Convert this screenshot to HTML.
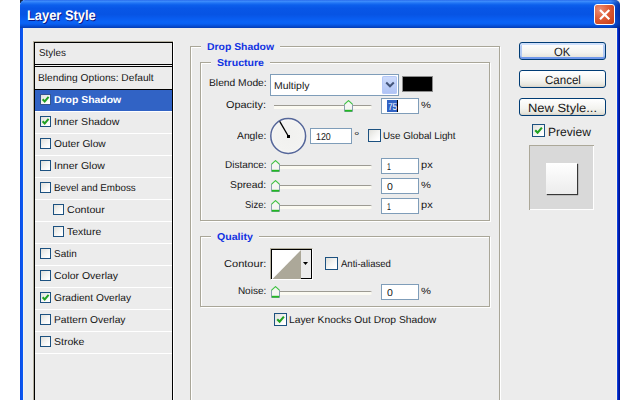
<!DOCTYPE html>
<html><head><meta charset="utf-8"><title>Layer Style</title>
<style>
html,body{margin:0;padding:0;width:640px;height:400px;overflow:hidden}
#root{position:absolute;left:0;top:0;width:640px;height:400px;overflow:hidden;background:#fff}
body{width:640px;height:400px;overflow:hidden;position:relative;background:#fff;font-family:"Liberation Sans",sans-serif}
.abs,.t,.cb,.inp,.btn,.trk,.ln,.box{position:absolute}
.t{white-space:nowrap;line-height:16px;transform-origin:0 0;text-rendering:geometricPrecision}
#win{position:absolute;left:20px;top:0;width:600px;height:420px;background:#ececec}
#tb{position:absolute;left:20px;top:0;width:600px;height:28px;border-radius:5px 5px 0 0;
background:linear-gradient(to bottom,#2a6cec 0,#3c8bfb 5%,#2074f4 11%,#0c5fec 18%,#0856e6 30%,#0754e4 52%,#095cef 66%,#0a63f6 78%,#0960f2 85%,#0752dc 91%,#0546c6 96%,#043cb4 100%)}
#bl{position:absolute;left:20px;top:28px;width:4px;height:380px;background:linear-gradient(to right,#0a4de6 0,#0a4de6 25%,#0a54f0 25%,#0a54f0 50%,#0c58ee 50%,#0c58ee 75%,#f3f3f3 75%)}
#br{position:absolute;left:616px;top:28px;width:4px;height:380px;background:linear-gradient(to right,#fbf6ec 0,#fbf6ec 25%,#1040d8 25%,#1040d8 50%,#0020b8 50%,#0020b8 75%,#001490 75%)}
#close{position:absolute;left:594px;top:4px;width:19px;height:19px;border:1px solid #fff;border-radius:3px;
background:radial-gradient(circle at 25% 25%,#eb8e76 0,#de5c36 45%,#c63a14 100%)}
.cb{border:1px solid #1c5180;background:linear-gradient(135deg,#dfdfda 0,#f4f4f2 50%,#fff 85%)}
.cb.sel{border-color:#35558d}
.inp{border:1px solid #7f9db9;background:#fff}
.btn{border:1px solid #003c74;border-radius:3px;background:linear-gradient(to bottom,#fff 0,#f3f3ef 60%,#e6e5dc 88%,#d6d0c5 100%)}
.btn.def{box-shadow:inset 0 -2px 0 #7098ea, inset 0 2px 0 #cfe0fb, inset 2px 0 0 #b2caf3, inset -2px 0 0 #b2caf3}
.trk{height:1px;background:#9d9b93;border-bottom:3px solid #fbfaf2;border-radius:0 2px 2px 0}
.g{background:#aca899}.w{background:#fff}
</style></head><body><div id=root>
<div id=win></div>
<div class=abs style="left:20px;top:0;width:3px;height:3px;background:#1a2742"></div>
<div id=tb></div><div class=abs style="left:596px;top:0;width:24px;height:28px;border-radius:0 5px 0 0;background:linear-gradient(to right,rgba(0,20,120,0) 0,rgba(0,20,120,0) 60%,rgba(0,16,110,.55) 100%)"></div><div id=bl></div><div id=br></div>
<div id=close><svg width=19 height=19 viewBox="0 0 19 19" style="position:absolute;left:0;top:0"><path d="M5 5 L14.3 14.3 M14.3 5 L5 14.3" stroke="#fff" stroke-width="2.2" stroke-linecap="butt"/></svg></div>

<div class=abs style="left:33px;top:41px;width:141px;height:380px;background:linear-gradient(to right,#b4b0a0 0,#b4b0a0 139px,#fff 139px)"></div><div class=abs style="left:33px;top:41px;width:140px;height:1px;background:#b4b0a0"></div>
<div class=abs style="left:34px;top:42px;width:139px;height:380px;background:#000"></div>
<div class=abs style="left:35px;top:43px;width:137px;height:380px;background:#ececec"></div>
<div class=abs style="left:35px;top:64px;width:137px;height:1px;background:#000"></div>
<div class=abs style="left:35px;top:65px;width:137px;height:1px;background:#f4f4f4"></div>
<div class=abs style="left:35px;top:66px;width:137px;height:1px;background:#000"></div>
<div class=abs style="left:35px;top:89px;width:137px;height:1px;background:#000"></div>
<div class=abs style="left:35px;top:90px;width:137px;height:21px;background:#3163c5"></div>

<div class=abs style="left:35px;top:111px;width:137px;height:1px;background:#fff"></div>
<div class=abs style="left:35px;top:133px;width:137px;height:1px;background:#fff"></div>
<div class=abs style="left:35px;top:155px;width:137px;height:1px;background:#fff"></div>
<div class=abs style="left:35px;top:177px;width:137px;height:1px;background:#fff"></div>
<div class=abs style="left:35px;top:199px;width:137px;height:1px;background:#fff"></div>
<div class=abs style="left:35px;top:221px;width:137px;height:1px;background:#fff"></div>
<div class=abs style="left:35px;top:243px;width:137px;height:1px;background:#fff"></div>
<div class=abs style="left:35px;top:265px;width:137px;height:1px;background:#fff"></div>
<div class=abs style="left:35px;top:287px;width:137px;height:1px;background:#fff"></div>
<div class=abs style="left:35px;top:309px;width:137px;height:1px;background:#fff"></div>
<div class=abs style="left:35px;top:331px;width:137px;height:1px;background:#fff"></div>
<div class=abs style="left:35px;top:353px;width:137px;height:1px;background:#fff"></div>
<div class='cb sel' style='left:40px;top:94px;width:9px;height:9px'><svg width=11 height=11 viewBox='0 0 11 11' style='position:absolute;left:-1px;top:-1px'><path d='M2.6 5.2 L4.7 7.4 L8.6 2.9' fill='none' stroke='#21a121' stroke-width='2' stroke-linecap='butt'/></svg></div>
<div class='cb ' style='left:40px;top:116px;width:9px;height:9px'><svg width=11 height=11 viewBox='0 0 11 11' style='position:absolute;left:-1px;top:-1px'><path d='M2.6 5.2 L4.7 7.4 L8.6 2.9' fill='none' stroke='#21a121' stroke-width='2' stroke-linecap='butt'/></svg></div>
<div class='cb ' style='left:40px;top:138px;width:9px;height:9px'></div>
<div class='cb ' style='left:40px;top:160px;width:9px;height:9px'></div>
<div class='cb ' style='left:40px;top:182px;width:9px;height:9px'></div>
<div class='cb ' style='left:53px;top:204px;width:9px;height:9px'></div>
<div class='cb ' style='left:53px;top:226px;width:9px;height:9px'></div>
<div class='cb ' style='left:40px;top:248px;width:9px;height:9px'></div>
<div class='cb ' style='left:40px;top:270px;width:9px;height:9px'></div>
<div class='cb ' style='left:40px;top:292px;width:9px;height:9px'><svg width=11 height=11 viewBox='0 0 11 11' style='position:absolute;left:-1px;top:-1px'><path d='M2.6 5.2 L4.7 7.4 L8.6 2.9' fill='none' stroke='#21a121' stroke-width='2' stroke-linecap='butt'/></svg></div>
<div class='cb ' style='left:40px;top:314px;width:9px;height:9px'></div>
<div class='cb ' style='left:40px;top:336px;width:9px;height:9px'></div>
<div class=abs style="box-sizing:border-box;left:191px;top:47px;width:310px;height:385px;border:1px solid #fff"></div><div class=abs style="box-sizing:border-box;left:190px;top:46px;width:310px;height:385px;border:1px solid #a9a698"></div><div class=abs style="left:201px;top:46px;width:79px;height:2px;background:#ececec"></div>
<div class=abs style="box-sizing:border-box;left:201px;top:63px;width:290px;height:159px;border:1px solid #fff"></div><div class=abs style="box-sizing:border-box;left:200px;top:62px;width:290px;height:159px;border:1px solid #a9a698"></div><div class=abs style="left:211px;top:62px;width:59px;height:2px;background:#ececec"></div>
<div class=abs style="box-sizing:border-box;left:201px;top:237px;width:290px;height:71px;border:1px solid #fff"></div><div class=abs style="box-sizing:border-box;left:200px;top:236px;width:290px;height:71px;border:1px solid #a9a698"></div><div class=abs style="left:211px;top:236px;width:48px;height:2px;background:#ececec"></div>
<div class=inp style="left:270px;top:74px;width:127px;height:20px"></div>
<div class=abs style="left:382px;top:76px;width:15px;height:18px;border-radius:2px;background:linear-gradient(to bottom,#cfdcfb 0,#bfd0f8 50%,#aec2f5 100%);box-shadow:inset 0 0 0 1px #b5c8f7"></div>
<svg class=abs style="left:384.5px;top:81px" width=10 height=8 viewBox="0 0 10 8"><path d="M1.2 1.5 L5 5.3 L8.8 1.5" fill="none" stroke="#44557a" stroke-width="2"/></svg>
<div class=abs style="left:402px;top:76px;width:29px;height:14px;border:1px solid #8c8c8c;background:#000"></div>

<div class=trk style='left:274px;top:105px;width:98px'></div><svg class=abs style='left:344px;top:100px' width=9 height=12 viewBox='0 0 9 12'><path d='M4.5 0.6 L8.5 4.2 V11.5 H0.5 V4.2 Z' fill='#f6f6f3' stroke='#8c9db4' stroke-width='1'/><path d='M0.4 4.3 L4.5 0.6 L8.6 4.3' fill='none' stroke='#44c844' stroke-width='1.1'/><path d='M0.8 9.8 H8.2 V11.6 H0.8 Z' fill='#22b922'/></svg>
<div class=inp style='left:381px;top:98px;width:36px;height:14px'></div>
<div class=abs style="left:387px;top:100px;width:10px;height:12px;background:#3163c5"></div><div class=abs style="left:397px;top:100px;width:1px;height:12px;background:#000"></div>
<svg class=abs style="left:268px;top:116px" width=40 height=40 viewBox="0 0 40 40"><defs><radialGradient id=dg cx="50%" cy="50%" r="50%"><stop offset="0" stop-color="#f1f1ef"/><stop offset="0.85" stop-color="#f3f3f1"/><stop offset="1" stop-color="#fafafa"/></radialGradient></defs>
<circle cx="20.2" cy="20" r="17.4" fill="url(#dg)" stroke="#56679a" stroke-width="1.5"/>
<path d="M20.5 20.5 L11.7 5.3" stroke="#000" stroke-width="1.3"/><rect x="19" y="19" width="3" height="3" fill="#000"/></svg>

<div class=inp style='left:310px;top:128px;width:40px;height:14px'></div>
<div class='cb ' style='left:368px;top:129px;width:11px;height:11px'></div>
<div class=trk style='left:274px;top:165px;width:98px'></div><svg class=abs style='left:271px;top:160px' width=9 height=12 viewBox='0 0 9 12'><path d='M4.5 0.6 L8.5 4.2 V11.5 H0.5 V4.2 Z' fill='#f6f6f3' stroke='#8c9db4' stroke-width='1'/><path d='M0.4 4.3 L4.5 0.6 L8.6 4.3' fill='none' stroke='#44c844' stroke-width='1.1'/><path d='M0.8 9.8 H8.2 V11.6 H0.8 Z' fill='#22b922'/></svg>
<div class=trk style='left:274px;top:185px;width:98px'></div><svg class=abs style='left:271px;top:180px' width=9 height=12 viewBox='0 0 9 12'><path d='M4.5 0.6 L8.5 4.2 V11.5 H0.5 V4.2 Z' fill='#f6f6f3' stroke='#8c9db4' stroke-width='1'/><path d='M0.4 4.3 L4.5 0.6 L8.6 4.3' fill='none' stroke='#44c844' stroke-width='1.1'/><path d='M0.8 9.8 H8.2 V11.6 H0.8 Z' fill='#22b922'/></svg>
<div class=trk style='left:274px;top:205px;width:98px'></div><svg class=abs style='left:271px;top:200px' width=9 height=12 viewBox='0 0 9 12'><path d='M4.5 0.6 L8.5 4.2 V11.5 H0.5 V4.2 Z' fill='#f6f6f3' stroke='#8c9db4' stroke-width='1'/><path d='M0.4 4.3 L4.5 0.6 L8.6 4.3' fill='none' stroke='#44c844' stroke-width='1.1'/><path d='M0.8 9.8 H8.2 V11.6 H0.8 Z' fill='#22b922'/></svg>
<div class=inp style='left:381px;top:158px;width:36px;height:14px'></div>
<div class=inp style='left:381px;top:178px;width:36px;height:14px'></div>
<div class=inp style='left:381px;top:198px;width:36px;height:14px'></div>
<div class=abs style="box-sizing:border-box;left:270px;top:248px;width:43px;height:32px;border:1px solid;border-color:#b4b0a0 #fff #fff #b4b0a0"></div>
<div class=abs style="left:271px;top:249px;width:41px;height:30px;background:#000"></div>
<div class=abs style="left:272px;top:250px;width:39px;height:28px;background:#ececec"></div>
<svg class=abs style="left:272px;top:250px" width=29 height=29 viewBox="0 0 29 29"><rect width=29 height=29 fill="#fff"/><path d="M29 0 V29 H0.5 Z" fill="#aca899"/></svg>
<svg class=abs style="left:303px;top:262px" width=5 height=3 viewBox="0 0 5 3"><path d="M0 0 H5 L2.5 3 Z" fill="#000"/></svg>

<div class='cb ' style='left:325px;top:257px;width:11px;height:11px'></div>
<div class=trk style='left:274px;top:291px;width:98px'></div><svg class=abs style='left:271px;top:286px' width=9 height=12 viewBox='0 0 9 12'><path d='M4.5 0.6 L8.5 4.2 V11.5 H0.5 V4.2 Z' fill='#f6f6f3' stroke='#8c9db4' stroke-width='1'/><path d='M0.4 4.3 L4.5 0.6 L8.6 4.3' fill='none' stroke='#44c844' stroke-width='1.1'/><path d='M0.8 9.8 H8.2 V11.6 H0.8 Z' fill='#22b922'/></svg>
<div class=inp style='left:381px;top:284px;width:36px;height:14px'></div>
<div class='cb ' style='left:274px;top:313px;width:11px;height:11px'><svg width=13 height=13 viewBox='0 0 13 13' style='position:absolute;left:-1px;top:-1px'><path d='M3.2 6.2 L5.6 8.6 L9.9 3.6' fill='none' stroke='#21a121' stroke-width='2.1' stroke-linecap='butt'/></svg></div>
<div class='btn def' style='left:519px;top:42px;width:85px;height:16px'></div>
<div class='btn' style='left:519px;top:70px;width:85px;height:16px'></div>
<div class='btn' style='left:519px;top:98px;width:85px;height:16px'></div>
<div class='cb ' style='left:532px;top:124px;width:11px;height:11px'><svg width=13 height=13 viewBox='0 0 13 13' style='position:absolute;left:-1px;top:-1px'><path d='M3.2 6.2 L5.6 8.6 L9.9 3.6' fill='none' stroke='#21a121' stroke-width='2.1' stroke-linecap='butt'/></svg></div>
<div class=abs style="left:529px;top:145px;width:65px;height:65px;background:#d9d9d9;box-shadow:inset 1px 1px 0 #aca899, inset -1px -1px 0 #fff"></div>
<div class=abs style="left:546px;top:163px;width:31px;height:31px;background:linear-gradient(to bottom,#fff,#ececec);box-shadow:1px 1px 1px rgba(0,0,0,.75)"></div>

<div class=t style='left:27.00px;top:7px;font-size:14px;font-weight:700;color:#fff;transform:scaleX(0.9186);text-shadow:1px 1px 0 #0a1883;'>Layer Style</div>
<div class=t style='left:38.76px;top:46px;font-size:10px;font-weight:400;color:#161616;transform:scaleX(0.9858);'>Styles</div>
<div class=t style='left:38.36px;top:71px;font-size:10px;font-weight:400;color:#161616;transform:scaleX(1.0200);'>Blending Options: Default</div>
<div class=t style='left:53.85px;top:93px;font-size:10px;font-weight:700;color:#fff;transform:scaleX(1.0431);'>Drop Shadow</div>
<div class=t style='left:53.57px;top:115px;font-size:10px;font-weight:400;color:#161616;transform:scaleX(1.0595);'>Inner Shadow</div>
<div class=t style='left:53.99px;top:137px;font-size:10px;font-weight:400;color:#161616;transform:scaleX(1.0224);'>Outer Glow</div>
<div class=t style='left:53.58px;top:159px;font-size:10px;font-weight:400;color:#161616;transform:scaleX(1.0526);'>Inner Glow</div>
<div class=t style='left:53.64px;top:181px;font-size:10px;font-weight:400;color:#161616;transform:scaleX(0.9802);'>Bevel and Emboss</div>
<div class=t style='left:66.97px;top:203px;font-size:10px;font-weight:400;color:#161616;transform:scaleX(1.0609);'>Contour</div>
<div class=t style='left:67.24px;top:225px;font-size:10px;font-weight:400;color:#161616;transform:scaleX(1.0428);'>Texture</div>
<div class=t style='left:54.00px;top:247px;font-size:10px;font-weight:400;color:#161616;transform:scaleX(0.9942);'>Satin</div>
<div class=t style='left:53.98px;top:269px;font-size:10px;font-weight:400;color:#161616;transform:scaleX(1.0474);'>Color Overlay</div>
<div class=t style='left:53.99px;top:291px;font-size:10px;font-weight:400;color:#161616;transform:scaleX(1.0200);'>Gradient Overlay</div>
<div class=t style='left:53.60px;top:313px;font-size:10px;font-weight:400;color:#161616;transform:scaleX(1.0292);'>Pattern Overlay</div>
<div class=t style='left:53.97px;top:335px;font-size:10px;font-weight:400;color:#161616;transform:scaleX(1.0536);'>Stroke</div>
<div class=t style='left:206.85px;top:40px;font-size:10px;font-weight:700;color:#1233e2;transform:scaleX(1.0392);'>Drop Shadow</div>
<div class=t style='left:217.10px;top:56px;font-size:10px;font-weight:700;color:#1233e2;transform:scaleX(1.0571);'>Structure</div>
<div class=t style='left:217.10px;top:230px;font-size:10px;font-weight:700;color:#1233e2;transform:scaleX(1.0597);'>Quality</div>
<div class=t style='left:208.50px;top:76px;font-size:10px;font-weight:400;color:#161616;transform:scaleX(1.0271);'>Blend Mode:</div>
<div class=t style='left:226.36px;top:98px;font-size:10px;font-weight:400;color:#161616;transform:scaleX(1.0879);'>Opacity:</div>
<div class=t style='left:237.00px;top:129px;font-size:10px;font-weight:400;color:#161616;transform:scaleX(1.0320);'>Angle:</div>
<div class=t style='left:224.63px;top:158px;font-size:10px;font-weight:400;color:#161616;transform:scaleX(0.9969);'>Distance:</div>
<div class=t style='left:229.98px;top:178px;font-size:10px;font-weight:400;color:#161616;transform:scaleX(1.0335);'>Spread:</div>
<div class=t style='left:245.03px;top:198px;font-size:10px;font-weight:400;color:#161616;transform:scaleX(0.9461);'>Size:</div>
<div class=t style='left:223.95px;top:257px;font-size:10px;font-weight:400;color:#161616;transform:scaleX(1.1051);'>Contour:</div>
<div class=t style='left:237.88px;top:284px;font-size:10px;font-weight:400;color:#161616;transform:scaleX(1.0000);'>Noise:</div>
<div class=t style='left:273.59px;top:79px;font-size:10px;font-weight:400;color:#161616;transform:scaleX(1.0455);'>Multiply</div>
<div class=t style='left:387.59px;top:100px;font-size:10px;font-weight:400;color:#fff;transform:scaleX(0.8293);'>75</div>
<div class=t style='left:421.03px;top:97px;font-size:9px;font-weight:400;color:#161616;transform:scaleX(1.2414);'>%</div>
<div class=t style='left:316.08px;top:130px;font-size:10px;font-weight:400;color:#161616;transform:scaleX(0.8871);'>120</div>
<div class=t style='left:354.14px;top:129px;font-size:10px;font-weight:400;color:#161616;transform:scaleX(1.3818);'>°</div>
<div class=t style='left:383.01px;top:129px;font-size:10px;font-weight:400;color:#161616;transform:scaleX(0.9812);'>Use Global Light</div>
<div class=t style='left:387.49px;top:160px;font-size:10px;font-weight:400;color:#161616;transform:scaleX(0.6857);'>1</div>
<div class=t style='left:421.06px;top:158px;font-size:10px;font-weight:400;color:#161616;transform:scaleX(1.1026);'>px</div>
<div class=t style='left:387.11px;top:180px;font-size:10px;font-weight:400;color:#161616;transform:scaleX(1.0526);'>0</div>
<div class=t style='left:421.03px;top:177px;font-size:9px;font-weight:400;color:#161616;transform:scaleX(1.2414);'>%</div>
<div class=t style='left:387.49px;top:200px;font-size:10px;font-weight:400;color:#161616;transform:scaleX(0.6857);'>1</div>
<div class=t style='left:421.06px;top:198px;font-size:10px;font-weight:400;color:#161616;transform:scaleX(1.1026);'>px</div>
<div class=t style='left:341.25px;top:257px;font-size:10px;font-weight:400;color:#161616;transform:scaleX(0.9540);'>Anti-aliased</div>
<div class=t style='left:387.11px;top:286px;font-size:10px;font-weight:400;color:#161616;transform:scaleX(1.0526);'>0</div>
<div class=t style='left:421.03px;top:283px;font-size:9px;font-weight:400;color:#161616;transform:scaleX(1.2414);'>%</div>
<div class=t style='left:289.10px;top:313px;font-size:10px;font-weight:400;color:#161616;transform:scaleX(1.0299);'>Layer Knocks Out Drop Shadow</div>
<div class=t style='left:553.91px;top:44px;font-size:12px;font-weight:400;color:#161616;transform:scaleX(0.9394);'>OK</div>
<div class=t style='left:544.90px;top:72px;font-size:12px;font-weight:400;color:#161616;transform:scaleX(0.9617);'>Cancel</div>
<div class=t style='left:527.72px;top:100px;font-size:12px;font-weight:400;color:#161616;transform:scaleX(1.0780);'>New Style...</div>
<div class=t style='left:547.59px;top:124px;font-size:12px;font-weight:400;color:#161616;transform:scaleX(1.0066);'>Preview</div>
</div></body></html>
